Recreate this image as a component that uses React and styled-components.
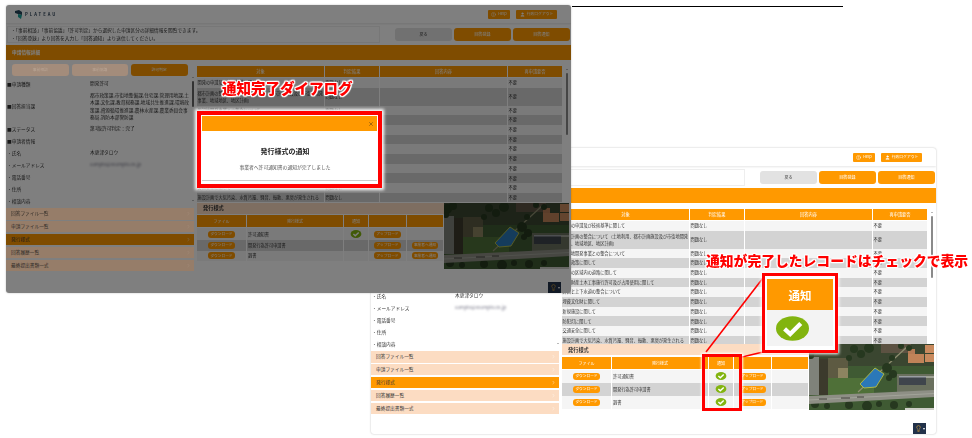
import React from 'react';
import styled, { createGlobalStyle } from 'styled-components';
import { CircleHelp, User, Lightbulb, ChevronRight, X } from 'lucide-react';

const GlobalStyle = createGlobalStyle`
  html, body {
    margin: 0;
    padding: 0;
    background: #fff;
  }
  body {
    font-family: "Noto Sans CJK JP", "Noto Sans", sans-serif;
  }
`;

const Canvas = styled.div`
  position: relative;
  width: 972px;
  height: 438px;
  overflow: hidden;
  background: #fff;
`;

const TopRule = styled.div`
  position: absolute;
  left: 572px;
  top: 6px;
  width: 271px;
  height: 1px;
  background: #000;
`;

/* one app window on the canvas */
const Window = styled.div`
  position: absolute;
  left: ${p => p.$x}px;
  top: ${p => p.$y}px;
  width: 565px;
  height: ${p => p.$h}px;
  display: flex;
  flex-direction: column;
  background: #fff;
  color: #333;
  font-size: 4.7px;
  line-height: 1;
  overflow: hidden;
  border-radius: 3px;
  box-shadow: 0 0 2px rgba(0, 0, 0, 0.28);
  filter: blur(0.3px);
  &::after {
    content: "";
    display: ${p => (p.$dimmed ? 'block' : 'none')};
    position: absolute;
    inset: 0;
    background: rgba(0, 0, 0, 0.5);
  }
`;

const Header = styled.header`
  flex: none;
  height: 18px;
  display: flex;
  align-items: center;
  gap: 6px;
  padding: 0 14px 0 9px;
  box-sizing: border-box;
  box-shadow: 0 1px 2px rgba(0, 0, 0, 0.1);
`;

const Logo = styled.div`
  display: flex;
  align-items: center;
  gap: 3px;
  margin-right: auto;
  font-size: 4.2px;
  font-weight: 700;
  letter-spacing: 2px;
  color: #33475b;
`;

const HeaderButton = styled.div`
  height: 9px;
  width: ${p => p.$w}px;
  display: flex;
  align-items: center;
  justify-content: center;
  gap: 2px;
  background: #ff9900;
  color: #fff;
  border-radius: 1px;
  font-size: 3.8px;
`;

const ActionBar = styled.div`
  flex: none;
  height: 22px;
  display: flex;
  align-items: center;
  gap: 2px;
  padding: 0 1px 0 1px;
`;

const Notice = styled.div`
  flex: 1;
  height: 17px;
  display: flex;
  flex-direction: column;
  justify-content: center;
  gap: 3px;
  padding-left: 3px;
  margin-right: 13px;
  border: 0.5px solid #eee;
  box-sizing: border-box;
`;

const ActionButton = styled.div`
  flex: none;
  width: 57px;
  height: 13px;
  display: flex;
  align-items: center;
  justify-content: center;
  border-radius: 3px;
  font-size: 4px;
  background: ${p => (p.$gray ? '#e2e2e2' : '#ff9900')};
  color: ${p => (p.$gray ? '#444' : '#fff')};
`;

const Band = styled.div`
  flex: none;
  height: 15px;
  display: flex;
  align-items: center;
  padding-left: 6px;
  background: #ff9900;
  color: #fff;
  font-weight: 700;
`;

const Body = styled.div`
  flex: 1;
  min-height: 0;
  display: flex;
  gap: 3px;
`;

const LeftColumn = styled.div`
  flex: none;
  width: 188px;
  display: flex;
  flex-direction: column;
`;

const Tabs = styled.div`
  flex: none;
  display: flex;
  gap: 3px;
  padding: 4px 0 2px 6px;
`;

/* the pale parts stay lighter than the dim layer in the dimmed window */
const Tab = styled.div`
  position: relative;
  z-index: ${p => (p.$dimmed && !p.$on ? 1 : 0)};
  width: 56.5px;
  height: 12px;
  display: flex;
  align-items: center;
  justify-content: center;
  border-radius: 3px;
  font-size: 3.8px;
  color: ${p => (p.$dimmed && !p.$on ? '#b9a595' : '#fff')};
  background: ${p => (p.$on ? '#ff9900' : p.$dimmed ? '#a38c7b' : '#fcd9bd')};
`;

const InfoRow = styled.div`
  display: grid;
  grid-template-columns: 83px 100px;
  align-items: center;
  min-height: ${p => (p.$tall ? 33 : 12)}px;
  padding-left: 1px;
`;

const InfoValue = styled.div`
  line-height: 7.5px;
  ${p => (p.$blur ? 'filter: blur(1.1px); color: #778;' : '')}
`;

const Accordion = styled.div`
  display: flex;
  flex-direction: column;
  gap: 1.4px;
  margin-top: 1px;
`;

const AccordionRow = styled.div`
  position: relative;
  z-index: ${p => (p.$dimmed && !p.$on ? 1 : 0)};
  height: 11.5px;
  display: flex;
  align-items: center;
  justify-content: space-between;
  padding: 0 3px 0 5px;
  color: ${p => (p.$dimmed && !p.$on ? '#2e2a26' : '#333')};
  background: ${p => (p.$on ? '#ff9900' : p.$dimmed ? '#967d69' : '#fcdcc2')};
  svg {
    color: ${p => (p.$dimmed && !p.$on ? '#a99483' : '#fff')};
  }
`;

const RightColumn = styled.div`
  flex: 1;
  min-width: 0;
  display: flex;
  flex-direction: column;
  padding-top: 6px;
`;

const TableArea = styled.div`
  position: relative;
  flex: none;
  height: ${p => p.$h}px;
  overflow: hidden;
  font-size: 4.2px;
`;

const Grid = styled.div`
  display: grid;
  grid-template-columns: 128px 55px 128px 55px;
  width: 366px;
  align-items: stretch;
`;

const HeadCell = styled.div`
  height: 11px;
  margin-bottom: 0.5px;
  display: flex;
  align-items: center;
  justify-content: center;
  background: #ff9900;
  color: #fff;
  border-right: 0.7px solid #fff;
  box-sizing: border-box;
`;

const Cell = styled.div`
  min-height: ${p => p.$h}px;
  display: flex;
  align-items: center;
  line-height: 7.2px;
  padding-left: 0.5px;
  box-sizing: border-box;
  background: ${p => (p.$alt ? '#d3d3d3' : '#f5f5f5')};
  border-right: 0.7px solid #fff;
`;

const ScrollBar = styled.div`
  position: absolute;
  top: 7px;
  right: 3px;
  width: 2px;
  height: 62px;
  background: #8a8a8a;
  border-radius: 1px;
  &::before {
    content: "";
    position: absolute;
    left: 0;
    top: -4px;
    border-left: 1px solid transparent;
    border-right: 1px solid transparent;
    border-bottom: 1.5px solid #777;
  }
`;

const LeftScroll = styled(ScrollBar)`
  top: 76px;
  right: auto;
  left: 186px;
  height: 26px;
  background: #666;
  &::after {
    content: "";
    position: absolute;
    left: 0;
    top: 119px;
    border-left: 1px solid transparent;
    border-right: 1px solid transparent;
    border-top: 1.5px solid #777;
  }
`;

const FormsPanel = styled.div`
  flex: none;
  width: 247px;
  display: flex;
  flex-direction: column;
`;

const PanelBody = styled.div`
  display: flex;
`;

const PanelTitle = styled.div`
  height: 11px;
  display: flex;
  align-items: center;
  padding-left: 6px;
  background: #fcdcc2;
  color: #333;
  font-size: 5.2px;
  font-weight: 700;
`;

const FormGrid = styled.div`
  margin-top: 1.5px;
  display: grid;
  grid-template-columns: 50px 97px 25px 38px 37px;
  font-size: 4.2px;
`;

const FormHead = styled(HeadCell)`
  height: 12px;
  margin-bottom: 1px;
  font-size: 4px;
`;

const FormCell = styled.div`
  height: ${p => p.$h}px;
  display: flex;
  align-items: center;
  justify-content: ${p => (p.$left ? 'flex-start' : 'center')};
  padding-left: ${p => (p.$left ? 1 : 0)}px;
  background: ${p => (p.$alt ? '#d3d3d3' : '#f5f5f5')};
  border-right: 0.7px solid #fff;
  box-sizing: border-box;
`;

const Pill = styled.div`
  width: 26.5px;
  height: 7px;
  display: flex;
  align-items: center;
  justify-content: center;
  border-radius: 3px;
  background: #ff9900;
  color: #fff;
  font-size: 3.7px;
`;

const Aerial = styled.svg`
  flex: none;
  display: block;
  width: 125px;
  height: 66px;
  filter: blur(0.25px);
`;

const BulbButton = styled.div`
  position: absolute;
  right: 10px;
  bottom: 0;
  width: 13px;
  height: 11px;
  display: flex;
  align-items: center;
  justify-content: center;
  gap: 1px;
  background: #22324a;
  color: #e0a63a;
  &::after {
    content: "";
    border-left: 1.5px solid transparent;
    border-right: 1.5px solid transparent;
    border-top: 2px solid #fff;
  }
`;

/* annotations laid over the two windows */
const CalloutText = styled.div`
  position: absolute;
  left: ${p => p.$x}px;
  top: ${p => p.$y}px;
  white-space: nowrap;
  color: #ff0000;
  font-size: ${p => p.$size}px;
  line-height: 1;
  font-weight: 900;
  text-shadow: 1px 0 1px #fff, -1px 0 1px #fff, 0 1px 1px #fff, 0 -1px 1px #fff,
    1px 1px 1px #fff, -1px -1px 1px #fff, 1px -1px 1px #fff, -1px 1px 1px #fff;
`;

const Dialog = styled.div`
  position: absolute;
  left: 197px;
  top: 111px;
  width: 185px;
  height: 77px;
  box-sizing: border-box;
  border: 4px solid #f00;
  background: #fff;
  box-shadow: 0 0 3px 2px #fff;
  display: flex;
  flex-direction: column;
  align-items: center;
  padding: 1px;
  filter: blur(0.25px);
`;

const DialogHead = styled.div`
  flex: none;
  align-self: stretch;
  height: 15px;
  display: flex;
  align-items: center;
  justify-content: flex-end;
  padding-right: 3px;
  background: #ff9900;
  color: #8a5a10;
`;

const DialogTitle = styled.div`
  margin: 15px 9px 0 0;
  font-size: 7px;
  font-weight: 700;
  color: #222;
`;

const DialogText = styled.div`
  margin: 7px 9px 0 0;
  font-size: 4.8px;
  color: #555;
`;

const DialogFoot = styled.div`
  margin-top: auto;
  align-self: stretch;
  height: 1.5px;
  margin-bottom: 2px;
  background: #ccc;
`;

const LeaderLines = styled.svg`
  position: absolute;
  left: 0;
  top: 0;
  width: 972px;
  height: 438px;
  pointer-events: none;
`;

const SmallMark = styled.div`
  position: absolute;
  left: 702px;
  top: 354px;
  width: 40px;
  height: 57px;
  box-sizing: border-box;
  border: 3px solid #f00;
  box-shadow: 0 0 2px 1px rgba(255, 255, 255, 0.9);
`;

const ZoomBox = styled.div`
  position: absolute;
  left: 762px;
  top: 273px;
  width: 76px;
  height: 80px;
  box-sizing: border-box;
  border: 3px solid #f00;
  padding: 3px 2px 2px;
  background: #fff;
  box-shadow: 0 0 3px 1px #fff;
  display: flex;
  flex-direction: column;
`;

const ZoomHead = styled.div`
  flex: none;
  height: 31px;
  display: flex;
  align-items: center;
  justify-content: center;
  background: #ff9900;
  color: #fff;
  font-size: 11.5px;
  font-weight: 700;
  filter: blur(0.3px);
`;

const ZoomBody = styled.div`
  flex: 1;
  display: flex;
  align-items: center;
  padding-left: 9px;
  background: #f3f3f3;
  margin-bottom: 2px;
`;

const OVAL_SIZES = { small: [12, 8], big: [33, 25] };

const CheckOval = ({ size }) => {
  const [w, h] = OVAL_SIZES[size];
  return (
    <svg width={w} height={h} viewBox="0 0 100 74">
      <ellipse cx="50" cy="37" rx="50" ry="37" fill="#82b40f" />
      <path d="M26 38 L43 54 L75 22" fill="none" stroke="#fff" strokeWidth="13" />
    </svg>
  );
};

const LogoMark = () => (
  <svg width="7" height="9" viewBox="0 0 7 9">
    <path d="M0 1 L4 0 L7 2 L7 5 L3 4 L0 3 Z" fill="#27465c" />
    <path d="M3 4 L7 5 L6 9 L3 7 Z" fill="#1aa39a" />
  </svg>
);

const TREES = [
  [3, 6, 5], [9, 3, 4], [2, 12, 3], [45, 5, 4], [52, 10, 4], [60, 4, 5], [40, 14, 3],
  [78, 24, 5], [84, 30, 4], [80, 34, 3], [83, 14, 3], [92, 2, 3], [100, 4, 3],
  [6, 60, 4], [18, 62, 3], [40, 61, 4], [58, 62, 5], [70, 60, 3], [85, 61, 4], [100, 60, 3],
];

const AerialMap = () => (
  <Aerial viewBox="0 0 125 66" preserveAspectRatio="none">
    <rect width="125" height="66" fill="#3f5a33" />
    <rect x="0" y="0" width="125" height="22" fill="#3a4630" />
    <rect x="72" y="0" width="30" height="9" fill="#5c5242" />
    <rect x="0" y="13" width="10" height="38" fill="#7f827a" />
    <rect x="10" y="15" width="9" height="36" fill="#3c3a2c" />
    <rect x="19" y="14" width="20" height="20" fill="#5d5a42" />
    <rect x="29" y="24" width="10" height="10" fill="#8d8460" />
    <rect x="19" y="34" width="46" height="18" fill="#4f7038" />
    <path d="M99 2 L49 48" stroke="#8f8f70" strokeWidth="1.2" />
    <path d="M88 30 H125 V50 H88 Z" fill="#6a705e" />
    <rect x="90" y="32" width="35" height="2" fill="#a0a396" />
    <rect x="90" y="32" width="27" height="9" fill="#3f454c" />
    <rect x="90" y="32" width="27" height="1.5" fill="#9a9ea2" />
    <rect x="116" y="1" width="9" height="8" fill="#c98a5e" />
    <rect x="116" y="10" width="9" height="8" fill="#c98a5e" />
    <rect x="99" y="10" width="16" height="9" fill="#c08358" />
    <rect x="99" y="5" width="7" height="5" fill="#b57b55" />
    {TREES.map(([cx, cy, r]) => (
      <circle key={`${cx}-${cy}`} cx={cx} cy={cy} r={r} fill="#26381f" />
    ))}
    <path d="M0 52 L125 46 L125 53 L0 60 Z" fill="#8e8f85" />
    <path d="M0 56 L125 49.5" stroke="#b6b8ae" strokeWidth="0.5" />
    <rect x="10" y="54" width="8" height="2" fill="#6c6c64" />
    <rect x="32" y="53" width="9" height="2" fill="#6c6c64" />
    <rect x="48" y="52" width="7" height="2" fill="#6c6c64" />
    <rect x="96" y="64" width="29" height="2" fill="#cfcfc8" />
    <path d="M66 24 L75 30 L67 43 L55 44 L51 40 Z" fill="#2b78b8" stroke="#c9c83c" strokeWidth="0.8" />
  </Aerial>
);

const INFO = [
  ['■申請種類', '開発許可'],
  ['■回答担当課', '都市政策課,市街地整備課,住宅課,管理用地課,土木課,文化課,教育総務課,地域共生推進課,環境政策課,資源循環推進課,農林水産課,農業委員会事務局,消防本部警防課', true],
  ['■ステータス', '第1版許可判定：完了'],
  ['■申請者情報', ''],
  ['・氏名', '木更津タロウ'],
  ['・メールアドレス', 'sample@example.co.jp', false, true],
  ['・電話番号', ''],
  ['・住所', ''],
  ['・相談内容', ''],
];

const ACCORDION = ['回答ファイル一覧', '申請ファイル一覧', '発行様式', '回答履歴一覧', '最終提出書類一式'];

const JUDGEMENTS = [
  ['開発の申請及び技術基準に関して', 10.5],
  ['都市計画の整合について（土地利用、都市計画施設及び市街地開発事業、地域地区、地区計画）', 17.5],
  ['周辺地開発事業との整合について', 9.7],
  ['環境政策に関して', 9.7],
  ['開発の区域内の道路に関して', 9.7],
  ['市有財産土木工事施行許可及び占用使用に関して', 9.7],
  ['計画と上下水道の整合について', 9.7],
  ['埋蔵文化財に関して', 9.7],
  ['新規施設に関して', 9.7],
  ['防犯灯に関して', 9.7],
  ['交通安全に関して', 9.7],
  ['施設計画で大気汚染、水質汚濁、騒音、振動、悪臭が発生される', 9.7],
];

const FORMS = ['許可通知書', '開発行為許可申請書', '調書'];

const AppWindow = ({ x, y, h, dimmed, tableH, formRows }) => (
  <Window $x={x} $y={y} $h={h} $dimmed={dimmed}>
    <Header>
      <Logo><LogoMark />PLATEAU</Logo>
      <HeaderButton $w={22}><CircleHelp size={5} />Help</HeaderButton>
      <HeaderButton $w={41}><User size={5} fill="#fff" />行政ログアウト</HeaderButton>
    </Header>
    <ActionBar>
      <Notice>
        <div>・「事前相談」「事前協議」「許可判定」から選択した申請区分の詳細情報を閲覧できます。</div>
        <div>・「回答登録」より回答を入力し「回答通知」より送信してください。</div>
      </Notice>
      <ActionButton $gray>戻る</ActionButton>
      <ActionButton>回答登録</ActionButton>
      <ActionButton>回答通知</ActionButton>
    </ActionBar>
    <Band>申請情報詳細</Band>
    <Body>
      <LeftColumn>
        <Tabs>
          <Tab $dimmed={dimmed}>事前相談</Tab>
          <Tab $dimmed={dimmed}>事前協議</Tab>
          <Tab $dimmed={dimmed} $on>許可判定</Tab>
        </Tabs>
        {INFO.map(([label, value, tall, blur]) => (
          <InfoRow key={label} $tall={tall}>
            <div>{label}</div>
            <InfoValue $blur={blur}>{value}</InfoValue>
          </InfoRow>
        ))}
        <Accordion>
          {ACCORDION.map(name => (
            <AccordionRow key={name} $dimmed={dimmed} $on={name === '発行様式'}>
              {name}
              <ChevronRight size={5} />
            </AccordionRow>
          ))}
        </Accordion>
      </LeftColumn>
      <RightColumn>
        <TableArea $h={tableH}>
          <Grid>
            <HeadCell>対象</HeadCell>
            <HeadCell>判定結果</HeadCell>
            <HeadCell>回答内容</HeadCell>
            <HeadCell>再申請要否</HeadCell>
            {JUDGEMENTS.map(([text, rowH], i) => (
              <React.Fragment key={text}>
                <Cell $h={rowH} $alt={i % 2 === 1}>{text}</Cell>
                <Cell $h={rowH} $alt={i % 2 === 1}>問題なし</Cell>
                <Cell $h={rowH} $alt={i % 2 === 1} />
                <Cell $h={rowH} $alt={i % 2 === 1}>不要</Cell>
              </React.Fragment>
            ))}
          </Grid>
          <ScrollBar />
        </TableArea>
        <PanelBody>
          <FormsPanel>
            <PanelTitle>発行様式</PanelTitle>
            <FormGrid>
              <FormHead>ファイル</FormHead>
              <FormHead>発行様式</FormHead>
              <FormHead>通知</FormHead>
              <FormHead />
              <FormHead />
              {FORMS.map((form, i) => {
                const row = formRows[i];
                return (
                  <React.Fragment key={form}>
                    <FormCell $h={row.h} $alt={i === 1}><Pill>ダウンロード</Pill></FormCell>
                    <FormCell $h={row.h} $alt={i === 1} $left>{form}</FormCell>
                    <FormCell $h={row.h} $alt={i === 1}>{row.done && <CheckOval size="small" />}</FormCell>
                    <FormCell $h={row.h} $alt={i === 1}><Pill>アップロード</Pill></FormCell>
                    <FormCell $h={row.h} $alt={i === 1}>{!row.done && <Pill>事業者へ通知</Pill>}</FormCell>
                  </React.Fragment>
                );
              })}
            </FormGrid>
          </FormsPanel>
          <AerialMap />
        </PanelBody>
      </RightColumn>
    </Body>
    <LeftScroll />
    <BulbButton><Lightbulb size={7} /></BulbButton>
  </Window>
);

const BACK_ROWS = [{ h: 12, done: true }, { h: 10.5, done: false }, { h: 10, done: false }];
const FRONT_ROWS = [{ h: 13, done: true }, { h: 13, done: true }, { h: 13, done: true }];

const App = () => (
  <Canvas>
    <GlobalStyle />
    <TopRule />
    <AppWindow x={371} y={148} h={286} tableH={135} formRows={FRONT_ROWS} />
    <AppWindow x={6} y={5} h={288} tableH={136.5} dimmed formRows={BACK_ROWS} />
    <CalloutText $x={222} $y={81} $size={14.5}>通知完了ダイアログ</CalloutText>
    <Dialog>
      <DialogHead><X size={6} strokeWidth={3} /></DialogHead>
      <DialogTitle>発行様式の通知</DialogTitle>
      <DialogText>事業者へ許可通知書の通知が完了しました</DialogText>
      <DialogFoot />
    </Dialog>
    <LeaderLines viewBox="0 0 972 438">
      <path d="M706 352 L763 278" stroke="#f00" strokeWidth="1.6" fill="none" />
      <path d="M742 357 L763 352" stroke="#f00" strokeWidth="1.6" fill="none" />
    </LeaderLines>
    <SmallMark />
    <ZoomBox>
      <ZoomHead>通知</ZoomHead>
      <ZoomBody><CheckOval size="big" /></ZoomBody>
    </ZoomBox>
    <CalloutText $x={706} $y={254} $size={13.8}>通知が完了したレコードはチェックで表示</CalloutText>
  </Canvas>
);

export default App;
